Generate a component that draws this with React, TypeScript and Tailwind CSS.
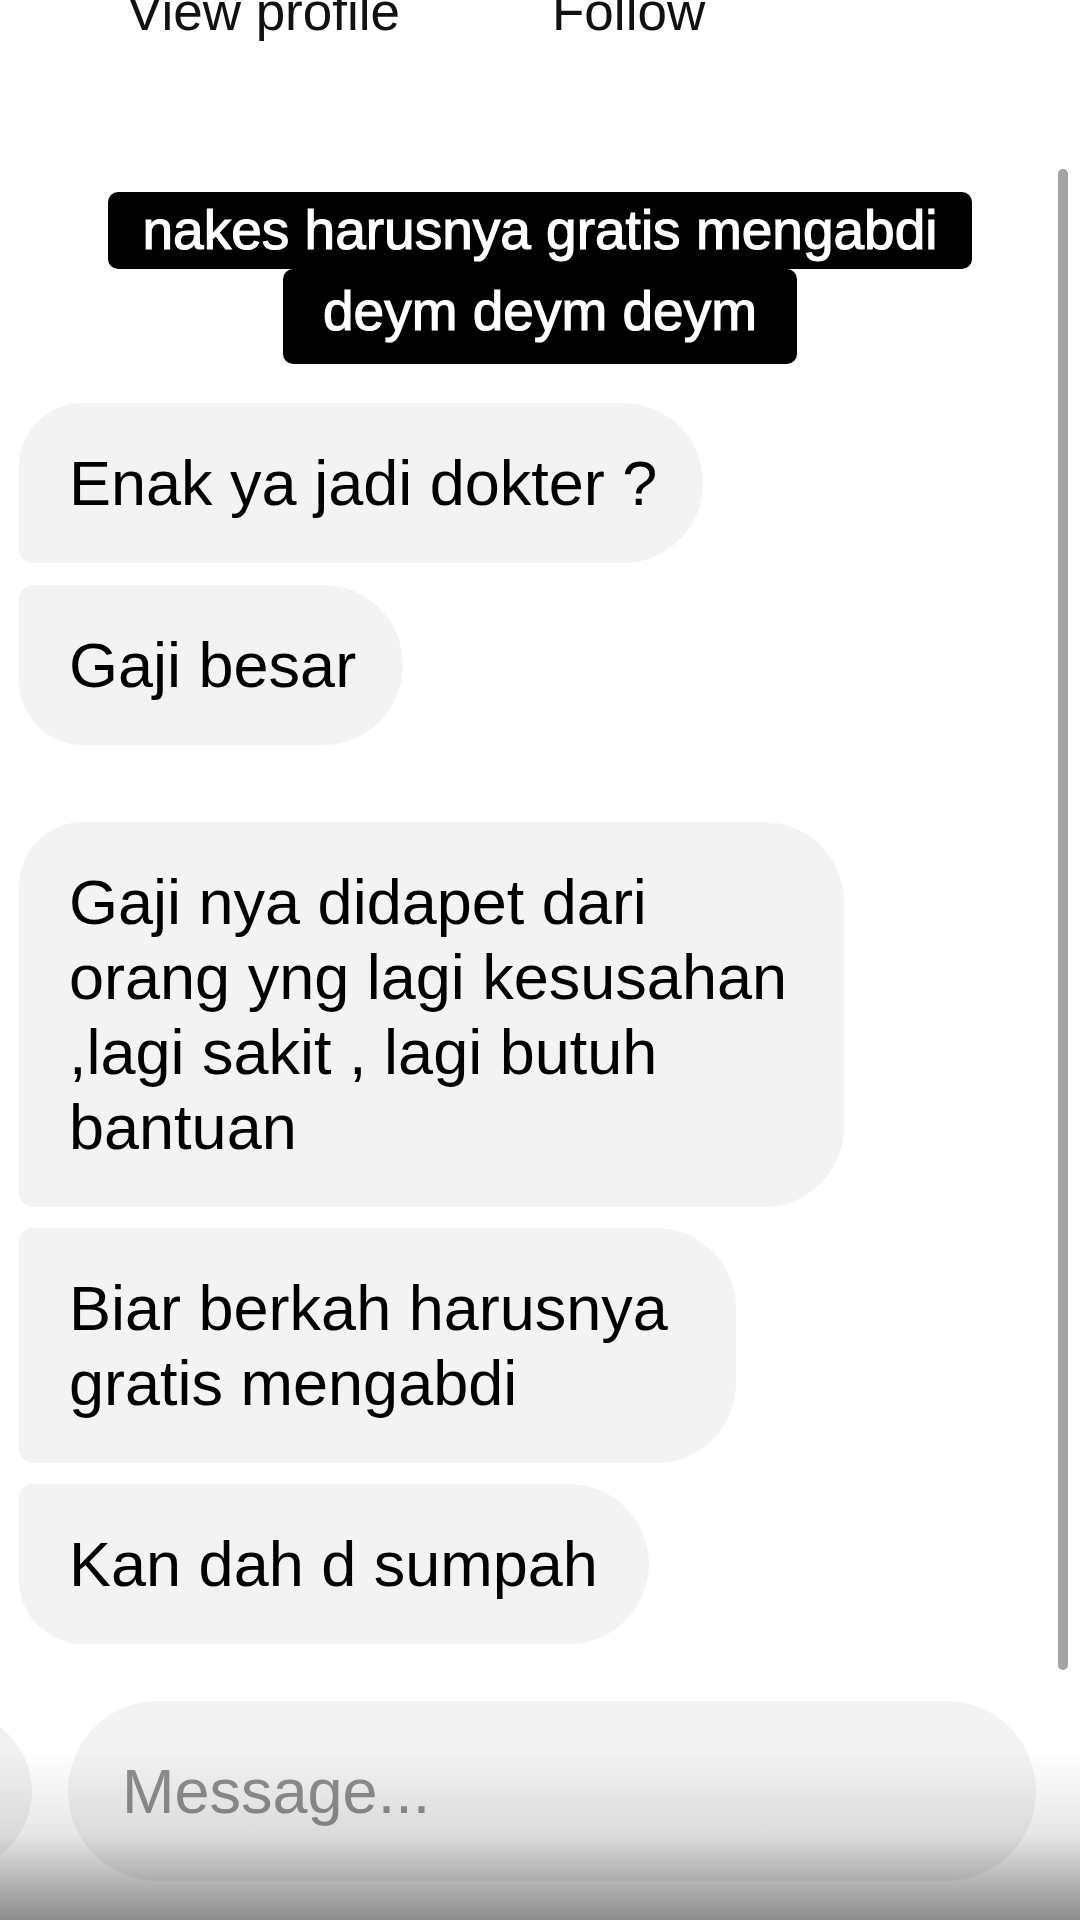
type Bubble = {
  id: number;
  lines: string[];
  width: string;
  shape: string;
  spacing: string;
};

// left corners follow the grouping: first of a run is round on top,
// last of a run is round on the bottom, middle ones stay tight
const bubbles: Bubble[] = [
  {
    id: 1,
    lines: ['Enak ya jadi dokter ?'],
    width: 'w-[684px]',
    shape: 'rounded-tl-[64px] rounded-bl-[14px]',
    spacing: 'mt-0',
  },
  {
    id: 2,
    lines: ['Gaji besar'],
    width: 'w-[384px]',
    shape: 'rounded-tl-[14px] rounded-bl-[64px]',
    spacing: 'mt-[22px]',
  },
  {
    id: 3,
    lines: ['Gaji nya didapet dari', 'orang yng lagi kesusahan', ',lagi sakit , lagi butuh', 'bantuan'],
    width: 'w-[825px]',
    shape: 'rounded-tl-[64px] rounded-bl-[14px]',
    spacing: 'mt-[77px]',
  },
  {
    id: 4,
    lines: ['Biar berkah harusnya', 'gratis mengabdi'],
    width: 'w-[717px]',
    shape: 'rounded-tl-[14px] rounded-bl-[14px]',
    spacing: 'mt-[21px]',
  },
  {
    id: 5,
    lines: ['Kan dah d sumpah'],
    width: 'w-[630px]',
    shape: 'rounded-tl-[14px] rounded-bl-[64px]',
    spacing: 'mt-[21px]',
  },
];

function MessageBubble({ bubble }: { bubble: Bubble }) {
  return (
    <div
      className={`${bubble.spacing} ${bubble.width} ${bubble.shape} ml-[19px] rounded-r-[80px] bg-[#f3f3f3] py-[42.5px] pl-[50px] pr-[46px] text-[63px] leading-[75px] text-black`}
    >
      {bubble.lines.map((line, i) => (
        <div key={i} className="whitespace-nowrap">
          {line}
        </div>
      ))}
    </div>
  );
}

export default function App() {
  return (
    <div className="relative h-[1920px] w-[1080px] overflow-hidden bg-white font-['Liberation_Sans',Arial,sans-serif]">
      {/* profile actions, scrolled mostly out of view */}
      <div className="-mt-[15px] flex h-[53px] items-center text-[53px] leading-[53px] text-[#111]">
        <span className="ml-[127px] whitespace-nowrap">View profile</span>
        <span className="ml-[152px] whitespace-nowrap">Follow</span>
      </div>

      {/* caption */}
      <div className="mt-[154px] flex flex-col items-center text-[55px] text-white [-webkit-text-stroke:1.2px_white]">
        <div className="h-[77px] whitespace-nowrap rounded-[10px] bg-black px-[35px] leading-[77px]">
          nakes harusnya gratis mengabdi
        </div>
        <div className="h-[95px] whitespace-nowrap rounded-[10px] bg-black px-[40px] pt-[4px] leading-[77px]">
          deym deym deym
        </div>
      </div>

      {/* thread */}
      <div className="mt-[39px] flex flex-col">
        {bubbles.map((b) => (
          <MessageBubble key={b.id} bubble={b} />
        ))}
      </div>

      {/* composer */}
      <div className="mt-[57px] flex items-center">
        <div className="-ml-[128px] h-[160px] w-[160px] shrink-0 rounded-full bg-[#f1f1f1]" />
        <div className="ml-[36px] flex h-[180px] w-[968px] shrink-0 items-center rounded-full bg-[#f3f3f3] pl-[54px] text-[63px] text-[#8e8e8e]">
          Message...
        </div>
      </div>

      {/* scroll indicator */}
      <div className="absolute left-[1058px] top-[169px] h-[1501px] w-[10px] rounded-full bg-[#a3a3a3]" />

      {/* bottom shade */}
      <div className="pointer-events-none absolute inset-x-0 bottom-0 h-[170px] bg-linear-to-b from-transparent via-black/10 to-black/45" />
    </div>
  );
}
